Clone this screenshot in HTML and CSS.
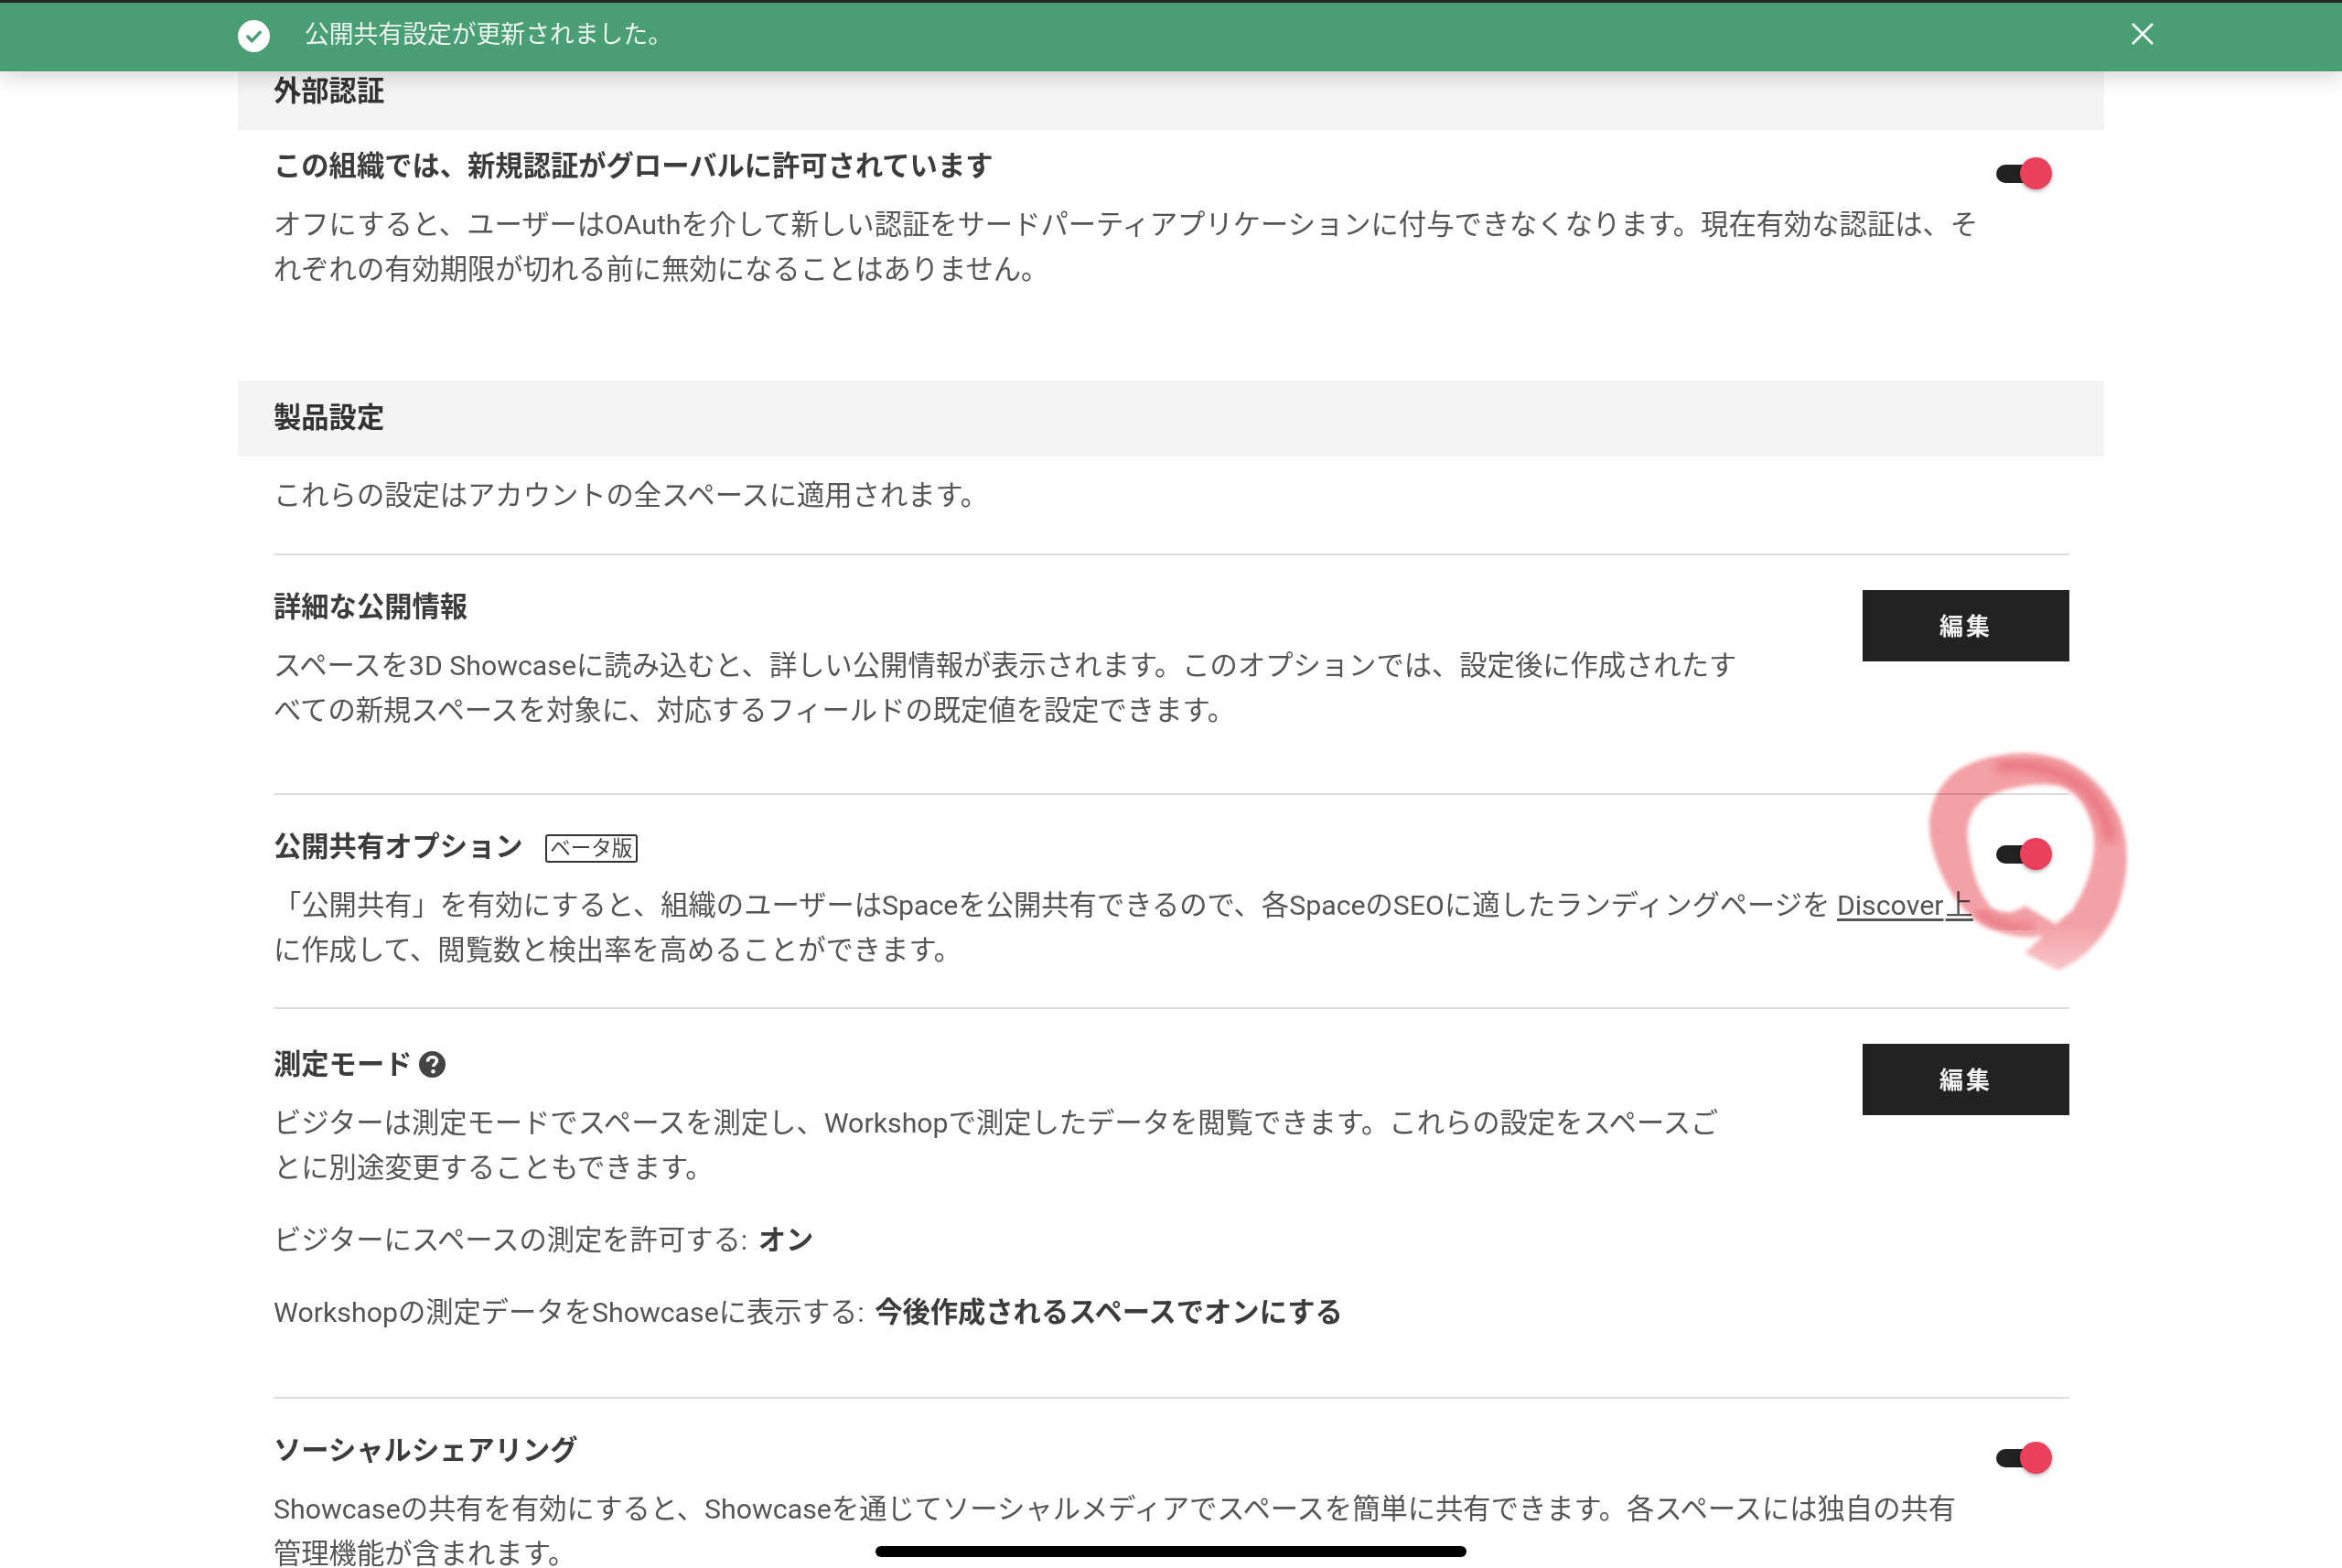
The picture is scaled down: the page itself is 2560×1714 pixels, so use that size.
FILE: index.html
```html
<!DOCTYPE html>
<html lang="ja">
<head>
<meta charset="utf-8">
<title>設定</title>
<link rel="stylesheet" href="styles.css">
</head>
<body>
<div class="page">
  <div class="toast">
    <svg class="toast-check" viewBox="0 0 34 34"><circle cx="17" cy="17" r="17" fill="#fff"/><path d="M10.5 17.5l4.5 4.5 8.5-9" fill="none" stroke="#4a9e74" stroke-width="3.4" stroke-linecap="round" stroke-linejoin="round"/></svg>
    <span class="toast-text">公開共有設定が更新されました。</span>
    <svg class="toast-close" viewBox="0 0 24 24"><path d="M1 1l22 22M23 1L1 23" fill="none" stroke="#fff" stroke-width="2.6"/></svg>
  </div>

  <main class="main">
    <section class="section">
      <h2 class="section-head">外部認証</h2>
      <div class="section-body">
        <div class="row row-auth">
          <div class="row-main row-main-wide">
            <h3 class="title">この組織では、新規認証がグローバルに許可されています</h3>
            <p class="desc">オフにすると、ユーザーはOAuthを介して新しい認証をサードパーティアプリケーションに付与できなくなります。現在有効な認証は、それぞれの有効期限が切れる前に無効になることはありません。</p>
          </div>
          <div class="toggle"><span class="toggle-track"></span><span class="toggle-knob"></span></div>
        </div>
      </div>
    </section>

    <section class="section section-product">
      <h2 class="section-head">製品設定</h2>
      <div class="section-body">
        <p class="desc intro">これらの設定はアカウントの全スペースに適用されます。</p>
        <div class="row row-detail">
          <div class="row-main">
            <h3 class="title">詳細な公開情報</h3>
            <p class="desc">スペースを3D Showcaseに読み込むと、詳しい公開情報が表示されます。このオプションでは、設定後に作成されたすべての新規スペースを対象に、対応するフィールドの既定値を設定できます。</p>
          </div>
          <button class="edit">編集</button>
        </div>
        <div class="row row-beta">
          <div class="row-main row-main-wide">
            <h3 class="title">公開共有オプション<span class="badge">ベータ版</span></h3>
            <p class="desc">「公開共有」を有効にすると、組織のユーザーはSpaceを公開共有できるので、各SpaceのSEOに適したランディングページを <a class="link">Discover</a><a class="link link-on">上</a>に作成して、閲覧数と検出率を高めることができます。</p>
          </div>
          <div class="toggle"><span class="toggle-track"></span><span class="toggle-knob"></span></div>
        </div>
        <div class="row row-measure">
          <div class="row-main">
            <h3 class="title">測定モード<svg class="help" viewBox="0 0 28 28"><circle cx="14" cy="14" r="14" fill="#444"/><path d="M9.2 11c0-3 2-4.8 4.9-4.8 2.8 0 4.7 1.7 4.7 4 0 3.4-3.7 3.2-3.7 6.3" fill="none" stroke="#fff" stroke-width="3.4"/><circle cx="15" cy="21.4" r="2.2" fill="#fff"/></svg></h3>
            <p class="desc">ビジターは測定モードでスペースを測定し、Workshopで測定したデータを閲覧できます。これらの設定をスペースごとに別途変更することもできます。</p>
            <p class="desc value">ビジターにスペースの測定を許可する: <strong class="strong">オン</strong></p>
            <p class="desc value">Workshopの測定データをShowcaseに表示する: <strong class="strong">今後作成されるスペースでオンにする</strong></p>
          </div>
          <button class="edit">編集</button>
        </div>
        <div class="row row-social">
          <div class="row-main row-main-wide">
            <h3 class="title">ソーシャルシェアリング</h3>
            <p class="desc">Showcaseの共有を有効にすると、Showcaseを通じてソーシャルメディアでスペースを簡単に共有できます。各スペースには独自の共有管理機能が含まれます。</p>
          </div>
          <div class="toggle"><span class="toggle-track"></span><span class="toggle-knob"></span></div>
        </div>
      </div>
    </section>
  </main>

  <svg class="scribble" viewBox="0 0 1380 960">
    <defs>
      <filter id="soft" x="-10%" y="-10%" width="120%" height="120%"><feGaussianBlur stdDeviation="6"/></filter>
      <filter id="softer" x="-10%" y="-10%" width="120%" height="120%"><feGaussianBlur stdDeviation="18"/></filter>
      <linearGradient id="ink" gradientUnits="userSpaceOnUse" x1="0" y1="690" x2="0" y2="840">
        <stop offset="0" stop-color="#f3a0a6"/>
        <stop offset="1" stop-color="#f8c6c9"/>
      </linearGradient>
    </defs>
    <path filter="url(#soft)" fill="url(#ink)" d="M1050 842 C1150 800 1220 710 1250 620 C1280 520 1285 430 1250 340 C1210 250 1130 170 1040 145 C950 115 810 130 720 185 C650 235 615 320 630 410 C650 510 700 610 770 670 C830 720 930 745 1000 728 L1040 690 L940 630 C900 660 860 655 830 635 C790 590 765 520 755 430 C745 370 760 320 800 285 C850 250 950 225 1050 235 C1110 250 1150 310 1165 390 C1175 470 1150 560 1095 645 L1030 700 L940 785 Z"/>
    <path filter="url(#softer)" fill="none" stroke="#e8707a" stroke-width="34" stroke-linecap="round" d="M860 175 C960 160 1080 190 1150 260 C1190 310 1210 350 1220 410"/>
    <path filter="url(#softer)" fill="none" stroke="#e8707a" stroke-width="26" stroke-linecap="round" d="M790 650 C840 695 900 705 960 705"/>
  </svg>

  <div class="home-bar"></div>
</div>
</body>
</html>
```
FILE: styles.css
```css
* { box-sizing: border-box; }
html, body { margin: 0; padding: 0; background: #fff; }
.page {
  position: relative;
  width: 2560px;
  height: 1714px;
  overflow: hidden;
  font-family: Roboto, "Noto Sans CJK JP", sans-serif;
  color: #555;
  font-size: 30.3px;
  line-height: 49px;
}
.toast {
  position: absolute;
  left: 0; top: 0; right: 0;
  height: 78px;
  z-index: 2;
  display: flex;
  align-items: center;
  padding-left: 260px;
  padding-bottom: 2px;
  background: #4a9e74;
  border-top: 3px solid #262626;
  box-shadow: 0 6px 22px rgba(0,0,0,.16);
}
.toast-check { width: 35px; height: 35px; flex: none; }
.toast-text { margin-left: 38px; font-size: 26.8px; color: #eef6f1; line-height: 1; padding-bottom: 3px; }
.toast-close { position: absolute; left: 2330px; top: 22px; width: 24px; height: 24px; }
.main { padding: 60px 260px 0; }
.section-head {
  margin: 0;
  height: 82px;
  display: flex;
  align-items: center;
  padding-left: 39px;
  padding-bottom: 3px;
  font-size: 30.3px;
  font-weight: 700;
  color: #333;
  background: #f4f4f4;
}
.section-product { margin-top: 97px; }
.section-product .section-head { height: 83px; }
.section-body { padding: 0 38px 0 39px; }
.row { display: flex; justify-content: space-between; align-items: flex-start; border-top: 2px solid #ddd; }
.row-auth { border-top: 0; padding-top: 15px; padding-right: 19px; }
.row-detail { padding-top: 32px; padding-bottom: 66px; }
.row-beta { padding-top: 32px; padding-bottom: 38px; padding-right: 19px; }
.row-measure { padding-top: 36px; padding-bottom: 68px; }
.row-social { padding-top: 32px; padding-right: 19px; }
.row-main { width: 1604px; }
.row-main-wide { width: 1866px; }
.title { margin: 0 0 15px; font-size: 30.3px; font-weight: 700; color: #3c3c3c; line-height: 49px; display: flex; align-items: center; }
.desc { margin: 0; }
.intro { padding-top: 18px; padding-bottom: 39px; }
.value { margin-top: 30px; }
.strong { font-weight: 700; color: #3c3c3c; margin-left: 4px; }
.link { text-decoration: underline; text-underline-offset: 4px; }
.link-on { margin-left: 2px; }
.badge {
  margin-left: 24px;
  width: 101px;
  height: 31px;
  border: 2px solid #333;
  border-radius: 3px;
  font-size: 22.5px;
  font-weight: 400;
  line-height: 26px;
  color: #444;
  text-align: center;
  margin-top: 4px;
}
.help { width: 29px; height: 29px; margin-left: 8px; }
.edit {
  width: 226px;
  height: 78px;
  margin-top: 6px;
  padding: 0 0 3px;
  flex: none;
  border: 0;
  background: #222;
  color: #f2f2f2;
  font: 700 26px Roboto, "Noto Sans CJK JP", sans-serif;
  letter-spacing: 3px;
}
.row-measure .edit { margin-top: 2px; }
.toggle { position: relative; width: 61px; height: 35px; flex: none; margin-top: 15px; }
.toggle-track { position: absolute; left: 0; top: 8px; width: 48px; height: 20px; border-radius: 10px; background: #222; }
.toggle-knob { position: absolute; right: 0; top: 0; width: 35px; height: 35px; border-radius: 50%; background: #ea405c; box-shadow: 0 2px 4px rgba(0,0,0,.3); }
.scribble { position: absolute; left: 1900px; top: 780px; width: 460px; height: 320px; mix-blend-mode: multiply; }
.home-bar { position: absolute; left: 957px; top: 1690px; width: 646px; height: 12px; border-radius: 6px; background: #000; }
```
